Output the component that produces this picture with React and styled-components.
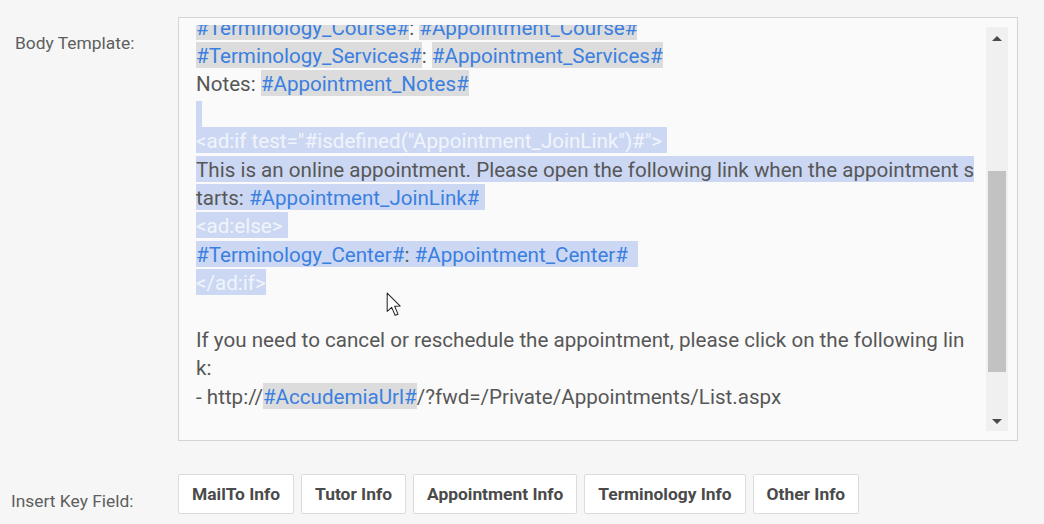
import React from 'react'
import styled, { createGlobalStyle } from 'styled-components'

const GlobalStyle = createGlobalStyle`
  html, body {
    margin: 0;
    padding: 0;
    background: #f6f6f6;
  }
  body {
    font-family: Roboto, "Liberation Sans", Arial, sans-serif;
  }
`

const Page = styled.div`
  width: 1044px;
  height: 524px;
  overflow: hidden;
  padding-top: 17px;
  box-sizing: border-box;
`

const FieldRow = styled.div`
  display: grid;
  grid-template-columns: 178px 840px;
  margin-bottom: ${p => p.gap || 0}px;
`

const Label = styled.div`
  padding-left: ${p => p.indent}px;
  padding-top: ${p => p.top}px;
  font-size: 17.4px;
  line-height: 21px;
  color: #5e5e5e;
`

const Editor = styled.div`
  position: relative;
  display: flex;
  height: 424px;
  box-sizing: border-box;
  padding-top: 7px;
  border: 1px solid #d4d4d4;
  background: #fafafa;
`

const Viewport = styled.div`
  flex: 1;
  overflow: hidden;
`

const TextArea = styled.div`
  margin-top: -11.4px;
  padding-left: 17px;
  font-size: 20.6px;
  color: #575757;
`

const Line = styled.div`
  height: 28.4px;
  line-height: 28.4px;
  white-space: pre;
`

const Seg = styled.span`
  padding: 2px 0 0;
  color: ${p => p.color};
  background: ${p => p.bg || 'transparent'};
`

const Caret = styled.span`
  display: inline-block;
  width: 6px;
  height: 27px;
  vertical-align: middle;
  background: #ccd8f3;
`

const Scrollbar = styled.div`
  width: 22px;
  margin: 2px 9px 9px 0;
  background: #f0f0f0;
  display: flex;
  flex-direction: column;
  align-items: center;
`

const Arrow = styled.div`
  width: 0;
  height: 0;
  border-left: 5px solid transparent;
  border-right: 5px solid transparent;
  ${p => p.down
    ? 'border-top: 5px solid #4a4a4a; margin-top: auto; margin-bottom: 7px;'
    : 'border-bottom: 5px solid #4a4a4a; margin-top: 9px;'}
`

const Thumb = styled.div`
  width: 18px;
  height: 201px;
  margin-top: 130px;
  background: #c2c2c2;
`

const Pointer = styled.svg`
  position: absolute;
  left: 207px;
  top: 274px;
`

const ButtonBar = styled.div`
  display: flex;
  gap: 7px;
`

const KeyButton = styled.button`
  height: 40px;
  padding: 0 13px;
  border: 1px solid #dcdcdc;
  border-radius: 2px;
  background: #fff;
  font-family: Roboto, "Liberation Sans", Arial, sans-serif;
  font-weight: 700;
  font-size: 17.4px;
  color: #4a4a4a;
`

const BLUE = '#3b7fe0'
const GREY_HL = '#dcdcdc'
const SEL = '#ccd8f3'
const PLAIN = '#575757'
const TAG = '#f1f4fb'

const styles = {
  plain: { color: PLAIN },
  token: { color: BLUE, bg: GREY_HL },
  sel: { color: PLAIN, bg: SEL },
  selTag: { color: TAG, bg: SEL },
  selToken: { color: BLUE, bg: SEL },
}

const lines = [
  [['token', '#Terminology_Course#'], ['plain', ': '], ['token', '#Appointment_Course#']],
  [['token', '#Terminology_Services#'], ['plain', ': '], ['token', '#Appointment_Services#']],
  [['plain', 'Notes: '], ['token', '#Appointment_Notes#']],
  'caret',
  [['selTag', '<ad:if test="#isdefined("Appointment_JoinLink")#"> ']],
  [['sel', 'This is an online appointment. Please open the following link when the appointment s']],
  [['sel', 'tarts: '], ['selToken', '#Appointment_JoinLink#'], ['sel', ' ']],
  [['selTag', '<ad:else> ']],
  [['selToken', '#Terminology_Center#'], ['sel', ': '], ['selToken', '#Appointment_Center#'], ['sel', '  ']],
  [['selTag', '</ad:if>']],
  [],
  [['plain', 'If you need to cancel or reschedule the appointment, please click on the following lin']],
  [['plain', 'k:']],
  [['plain', '- http://'], ['token', '#AccudemiaUrl#'], ['plain', '/?fwd=/Private/Appointments/List.aspx']],
]

const keyFields = ['MailTo Info', 'Tutor Info', 'Appointment Info', 'Terminology Info', 'Other Info']

export default function App() {
  return (
    <Page>
      <GlobalStyle />
      <FieldRow gap={33}>
        <Label indent={15} top={16}>Body Template:</Label>
        <Editor>
          <Viewport>
            <TextArea>
              {lines.map((line, i) => (
                <Line key={i}>
                  {line === 'caret'
                    ? <Caret />
                    : line.map(([kind, text], j) => (
                      <Seg key={j} color={styles[kind].color} bg={styles[kind].bg}>{text}</Seg>
                    ))}
                </Line>
              ))}
            </TextArea>
          </Viewport>
          <Scrollbar>
            <Arrow />
            <Thumb />
            <Arrow down />
          </Scrollbar>
          <Pointer width="16" height="25" viewBox="0 0 14 22">
            <path d="M1 1 L1 17 L5 13.5 L8 20.5 L10.5 19.5 L7.6 12.6 L12.5 12.4 Z" fill="#fff" stroke="#222" strokeWidth="0.9" strokeLinejoin="round" />
          </Pointer>
        </Editor>
      </FieldRow>
      <FieldRow>
        <Label indent={11} top={17}>Insert Key Field:</Label>
        <ButtonBar>
          {keyFields.map(k => <KeyButton key={k}>{k}</KeyButton>)}
        </ButtonBar>
      </FieldRow>
    </Page>
  )
}
